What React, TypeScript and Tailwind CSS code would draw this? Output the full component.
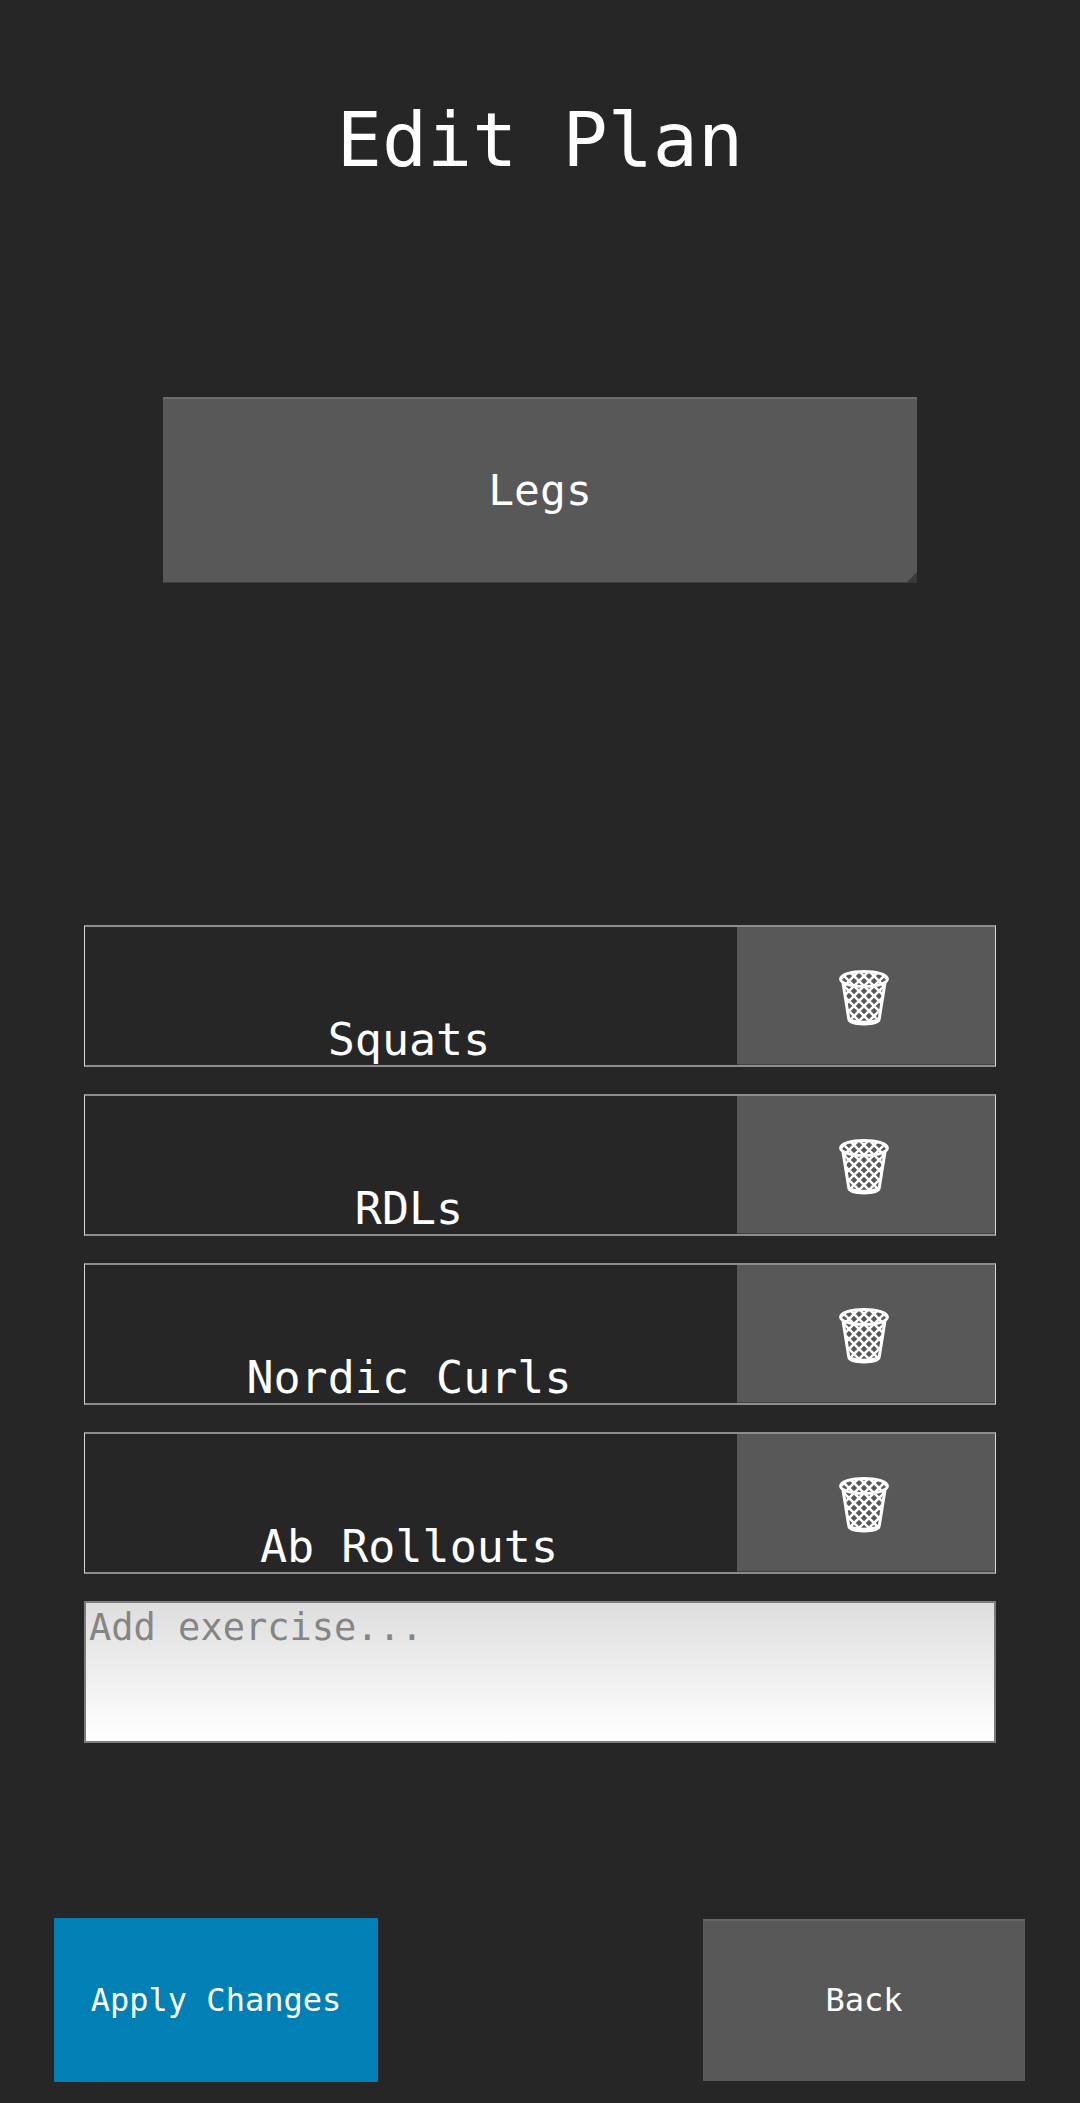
import { useState } from "react";

const initialExercises = ["Squats", "RDLs", "Nordic Curls", "Ab Rollouts"];

function Wastebasket() {
  return (
    <svg width="50" height="56" viewBox="0 0 50 56" fill="none" stroke="white" aria-hidden="true">
      <defs>
        <clipPath id="basket">
          <path d="M1 8C1 3.500 11 1 25 1s24 2.500 24 7c0 2-1 3.500-3 5l-5.500 37c-1 3-7 5-15.500 5s-14.500-2-15.500-5L4 13C2 11.500 1 10 1 8z" />
        </clipPath>
      </defs>
      <g clipPath="url(#basket)" strokeWidth="2.500">
        {[-60, -50, -40, -30, -20, -10, 0, 10, 20, 30, 40, 50].map((x) => (
          <path key={x} d={`M${x} 1L${x + 60} 61M${x + 60} 1L${x} 61`} />
        ))}
      </g>
      <ellipse cx="25" cy="9" rx="23.500" ry="7.500" strokeWidth="2.800" />
      <path d="M4 13L9.800 49C10.500 52.500 16.500 54 25 54s14.500-1.500 15.200-5L46 13" strokeWidth="3" />
      <path d="M9.500 49.500C14 52 19 52.500 25 52.500s11-.5 15.500-3" strokeWidth="3.500" />
    </svg>
  );
}

export default function App() {
  const [exercises, setExercises] = useState(initialExercises);
  const [draft, setDraft] = useState("");

  return (
    <main className="flex min-h-screen flex-col bg-[#262626] pb-[21px] font-['DejaVu_Sans_Mono',monospace] text-white">
      <h1 className="pt-[96px] text-center text-[75px] leading-[88px]">Edit Plan</h1>

      <div className="relative mx-auto mt-[213px] w-[70%] px-px">
        <select
          aria-label="Plan"
          className="block h-[186px] w-full appearance-none rounded-[1px] border-t-2 border-b border-t-[#6c6c6c] border-b-[#404040] bg-[#585858] text-center text-[43px] [text-align-last:center]"
        >
          <option>Legs</option>
        </select>
        <span className="pointer-events-none absolute right-px bottom-0 size-[11px] bg-[#3a3a3a] [clip-path:polygon(100%_0,100%_100%,0_100%)]" />
      </div>

      <section className="mt-[342px] flex flex-col gap-[27px] px-[84px]" aria-label="Exercises">
        {exercises.map((name) => (
          <div key={name} className="flex h-[142px] border-x border-y-2 border-x-[#d8d8d8] border-y-[#8c8c8c]">
            <div className="flex flex-1 items-end justify-center pr-1 pb-[3px] text-[45px] leading-[45px]">{name}</div>
            <button
              type="button"
              aria-label={`Remove ${name}`}
              onClick={() => setExercises(exercises.filter((item) => item !== name))}
              className="flex w-[258px] items-center justify-center border-b border-b-[#404040] bg-[#585858] pt-1 pr-1"
            >
              <Wastebasket />
            </button>
          </div>
        ))}
        <textarea
          aria-label="Add exercise"
          placeholder="Add exercise..."
          value={draft}
          onChange={(event) => setDraft(event.target.value)}
          className="block h-[142px] w-full resize-none border-2 border-[#7c7c7c] bg-linear-to-b from-[#dedede] to-white px-[3px] py-[3px] text-[37px] leading-[44px] text-[#262626] placeholder:text-[#858585]"
        />
      </section>

      <footer className="mt-auto flex justify-between px-[54px] text-[32px]">
        <button type="button" className="h-[164px] w-1/3 bg-[#0080b4]">
          Apply Changes
        </button>
        <button
          type="button"
          className="h-[164px] w-1/3 border border-[#262626] bg-[#585858] shadow-[inset_0_2px_0_#666]"
        >
          Back
        </button>
      </footer>
    </main>
  );
}
